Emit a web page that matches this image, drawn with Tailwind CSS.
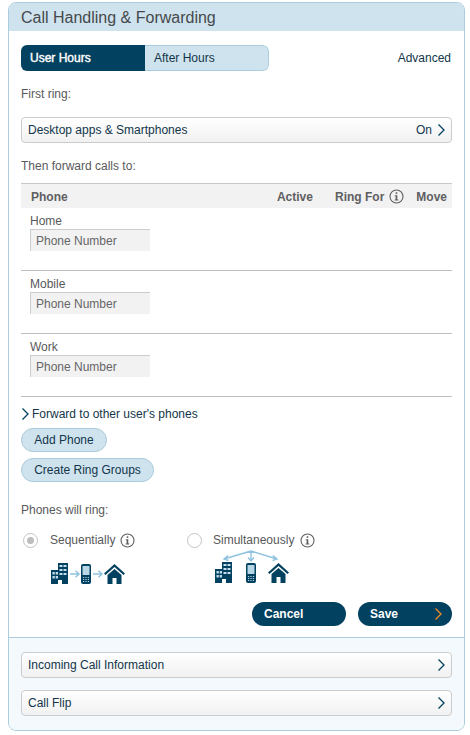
<!DOCTYPE html>
<html><head><meta charset="utf-8"><script src="https://cdn.jsdelivr.net/npm/@tailwindcss/browser@4"></script></head>
<body class="bg-white">
<div class="w-[470px] h-[735px] pt-[2px] pl-[8px] font-['Liberation_Sans',Arial,sans-serif] text-[12px] leading-[14px] text-[#59595b] overflow-hidden">
<div class="w-[457px] h-[729px] border border-[#a9cddd] rounded-[8px] overflow-hidden flex flex-col">
  <div class="h-[28px] bg-[#cfe3ee] pl-[12px] pt-[1px] flex items-center text-[16px] text-[#45494c] shrink-0">Call Handling &amp; Forwarding</div>
  <div class="flex-1 pl-[12px] pr-[12px]">
    <div class="mt-[14px] h-[26px] flex items-center justify-between">
      <div class="w-[248px] h-[26px] flex rounded-[6px] overflow-hidden">
        <div class="w-[124px] bg-[#02415f] text-white pl-[9px] flex items-center [-webkit-text-stroke:0.4px_white]">User Hours</div>
        <div class="flex-1 bg-[#cfe3ee] border border-l-0 border-[#a9cddd] rounded-r-[6px] pl-[9px] flex items-center text-[#12354a]">After Hours</div>
      </div>
      <span class="text-[#12354a] pr-[1px]">Advanced</span>
    </div>
    <p class="mt-[16px]">First ring:</p>
    <div class="mt-[16px] h-[26px] border border-[#cccccc] rounded-[4px] bg-gradient-to-b from-white to-[#f1f1f1] px-[6px] flex items-center justify-between text-[#12354a]">
      <span>Desktop apps &amp; Smartphones</span>
      <span class="flex items-center gap-[5px]">On
        <svg width="8" height="14" viewBox="0 0 8 14" fill="none" stroke="#02415f" stroke-width="1.300"><path d="M1.500 1.500l5.500 5.500-5.500 5.500"/></svg></span>
    </div>
    <p class="mt-[16px]">Then forward calls to:</p>
    <div class="mt-[10px] h-[25px] pt-[1px] bg-[#f2f2f2] border-t border-[#c8c8c8] flex items-center font-bold text-[#5f5f61]">
      <span class="pl-[10px] flex-1">Phone</span>
      <span class="mr-[22px]">Active</span>
      <span class="flex items-center gap-[5px] mr-[12px]">Ring For
        <svg width="15" height="15" viewBox="0 0 15 15"><circle cx="7.500" cy="7.500" r="6.500" fill="none" stroke="#5f5f61" stroke-width="1.100"/><rect x="6.700" y="3.300" width="1.600" height="1.600" fill="#5f5f61"/><path d="M5.800 6.300h2.500v4.300h1v1h-3.700v-1h1v-3.300h-.8z" fill="#5f5f61"/></svg></span>
      <span class="mr-[5px]">Move</span>
    </div>
    <div class="h-[63px] border-b border-[#bfbfbf] pl-[9px] pt-[6px]">
      <p>Home</p>
      <div class="mt-[1px] w-[120px] h-[22px] bg-[#f2f2f2] border-t border-l border-[#cccccc] pl-[5px] flex items-center text-[#666668]">Phone Number</div>
    </div>
    <div class="h-[63px] border-b border-[#bfbfbf] pl-[9px] pt-[6px]">
      <p>Mobile</p>
      <div class="mt-[1px] w-[120px] h-[22px] bg-[#f2f2f2] border-t border-l border-[#cccccc] pl-[5px] flex items-center text-[#666668]">Phone Number</div>
    </div>
    <div class="h-[63px] border-b border-[#bfbfbf] pl-[9px] pt-[6px]">
      <p>Work</p>
      <div class="mt-[1px] w-[120px] h-[22px] bg-[#f2f2f2] border-t border-l border-[#cccccc] pl-[5px] flex items-center text-[#666668]">Phone Number</div>
    </div>
    <div class="mt-[10px] flex items-center gap-[2px] text-[#12354a]">
      <svg width="9" height="14" viewBox="0 0 9 14" fill="none" stroke="#02415f" stroke-width="1.300"><path d="M1.500 1.500l5.500 5.500-5.500 5.500"/></svg>
      <span>Forward to other user's phones</span>
    </div>
    <div class="mt-[7px] w-[86px] h-[24px] rounded-full bg-[#cfe3ee] border border-[#a9cddd] flex items-center justify-center text-[#12354a]">Add Phone</div>
    <div class="mt-[6px] w-[133px] h-[24px] rounded-full bg-[#cfe3ee] border border-[#a9cddd] flex items-center justify-center text-[#12354a]">Create Ring Groups</div>
    <p class="mt-[21px]">Phones will ring:</p>
    <div class="mt-[13px] flex">
      <div class="w-[166px]">
        <div class="h-[20px] flex items-center pl-[2px]">
          <span class="w-[15px] h-[15px] rounded-full border border-[#c4c4c4] flex items-center justify-center"><span class="w-[7px] h-[7px] rounded-full bg-[#bdbdbd]"></span></span>
          <span class="ml-[12px]">Sequentially</span>
          <svg class="ml-[5px]" width="15" height="15" viewBox="0 0 15 15"><circle cx="7.500" cy="7.500" r="6.500" fill="none" stroke="#5f5f61" stroke-width="1.100"/><rect x="6.700" y="3.300" width="1.600" height="1.600" fill="#5f5f61"/><path d="M5.800 6.300h2.500v4.300h1v1h-3.700v-1h1v-3.300h-.8z" fill="#5f5f61"/></svg>
        </div>
        <svg class="mt-[13px] ml-[30px]" width="75" height="21" viewBox="0 0 75 21">
          <path d="M0 7h7V0h10v21H11v-4H7v4H0z" fill="#02415f"/><path d="M1.500 9h2.300v2.500H1.500zM4.700 9h2.300v2.500H4.700zM1.500 13h2.300v2.500H1.500zM4.700 13h2.300v2.500H4.700zM8.500 2h3v2h-3zM12.500 2h3v2h-3zM8.500 6h3v2h-3zM12.500 6h3v2h-3zM8.500 10h3v2h-3zM12.500 10h3v2h-3z" fill="#c4dfee"/>
          <path d="M19 11h9m-3.500-3.200l3.500 3.200-3.500 3.200" fill="none" stroke="#8fc3e0" stroke-width="1.400"/>
          <rect x="30" y="1" width="10" height="20" rx="2" fill="#02415f"/><rect x="31.500" y="3" width="7" height="9" rx=".5" fill="#b7d6e6"/><path d="M32 14.500h6M32 16.500h6M32 18.500h6" stroke="#b7d6e6" stroke-width="1" stroke-dasharray="1.200 1.200"/>
          <path d="M42 11h9m-3.500-3.200l3.500 3.200-3.500 3.200" fill="none" stroke="#8fc3e0" stroke-width="1.400"/>
          <path d="M53 10.500L63.500 1 74 10.500l-1.500 1.500-9-8-9 8z" fill="#02415f"/><path d="M56.500 12L63.500 6l7 6v9h-5v-6h-4v6h-5z" fill="#02415f"/>
        </svg>
      </div>
      <div class="pt-0">
        <div class="h-[20px] flex items-center">
          <span class="w-[15px] h-[15px] rounded-full border border-[#c4c4c4]"></span>
          <span class="ml-[11px]">Simultaneously</span>
          <svg class="ml-[6px]" width="15" height="15" viewBox="0 0 15 15"><circle cx="7.500" cy="7.500" r="6.500" fill="none" stroke="#5f5f61" stroke-width="1.100"/><rect x="6.700" y="3.300" width="1.600" height="1.600" fill="#5f5f61"/><path d="M5.800 6.300h2.500v4.300h1v1h-3.700v-1h1v-3.300h-.8z" fill="#5f5f61"/></svg>
        </div>
        <svg class="ml-[28px]" width="75" height="33" viewBox="0 0 75 33">
          <path d="M36 1L9 9m4.200-3.500L9 9l4.500 1.500M36 1v10m-3-3.500l3 3.500 3-3.500M36 1l26 8m-4.200-3.500L62 9l-4.500 1.500" fill="none" stroke="#8fc3e0" stroke-width="1.400"/>
          <path d="M0 19h7v-7h10v21H11v-4H7v4H0z" fill="#02415f"/><path d="M1.500 21h2.300v2.500H1.500zM4.700 21h2.300v2.500H4.700zM1.500 25h2.300v2.500H1.500zM4.700 25h2.300v2.500H4.700zM8.500 14h3v2h-3zM12.500 14h3v2h-3zM8.500 18h3v2h-3zM12.500 18h3v2h-3zM8.500 22h3v2h-3zM12.500 22h3v2h-3z" fill="#c4dfee"/>
          <rect x="31" y="13" width="10" height="20" rx="2" fill="#02415f"/><rect x="32.500" y="15" width="7" height="9" rx=".5" fill="#b7d6e6"/><path d="M33 26.500h6M33 28.500h6M33 30.500h6" stroke="#b7d6e6" stroke-dasharray="1.200 1.200"/>
          <path d="M53 22.500L63.500 13 74 22.500l-1.500 1.500-9-8-9 8z" fill="#02415f"/><path d="M56.500 24l7-6 7 6v9h-5v-6h-4v6h-5z" fill="#02415f"/>
        </svg>
      </div>
    </div>
    <div class="mt-[18px] flex justify-end gap-[12px] text-white font-bold">
      <div class="w-[94px] h-[24px] rounded-full bg-[#02415f] pl-[12px] flex items-center">Cancel</div>
      <div class="w-[94px] h-[24px] rounded-full bg-[#02415f] pl-[12px] pr-[10px] flex items-center justify-between">Save
        <svg width="8" height="14" viewBox="0 0 8 14" fill="none" stroke="#f08a24" stroke-width="1.300"><path d="M1.500 1.500l5.500 5.500-5.500 5.500"/></svg></div>
    </div>
  </div>
  <div class="h-[93px] shrink-0 bg-[#f3f9fc] border-t border-[#a9cddd] px-[12px] pt-[14px] flex flex-col gap-[12px] text-[#12354a]">
    <div class="h-[26px] border border-[#cccccc] rounded-[4px] bg-gradient-to-b from-white to-[#f1f1f1] px-[6px] flex items-center justify-between">
      <span>Incoming Call Information</span>
      <svg width="8" height="14" viewBox="0 0 8 14" fill="none" stroke="#02415f" stroke-width="1.300"><path d="M1.500 1.500l5.500 5.500-5.500 5.500"/></svg>
    </div>
    <div class="h-[26px] border border-[#cccccc] rounded-[4px] bg-gradient-to-b from-white to-[#f1f1f1] px-[6px] flex items-center justify-between">
      <span>Call Flip</span>
      <svg width="8" height="14" viewBox="0 0 8 14" fill="none" stroke="#02415f" stroke-width="1.300"><path d="M1.500 1.500l5.500 5.500-5.500 5.500"/></svg>
    </div>
  </div>
</div>
</div>
</body></html>
